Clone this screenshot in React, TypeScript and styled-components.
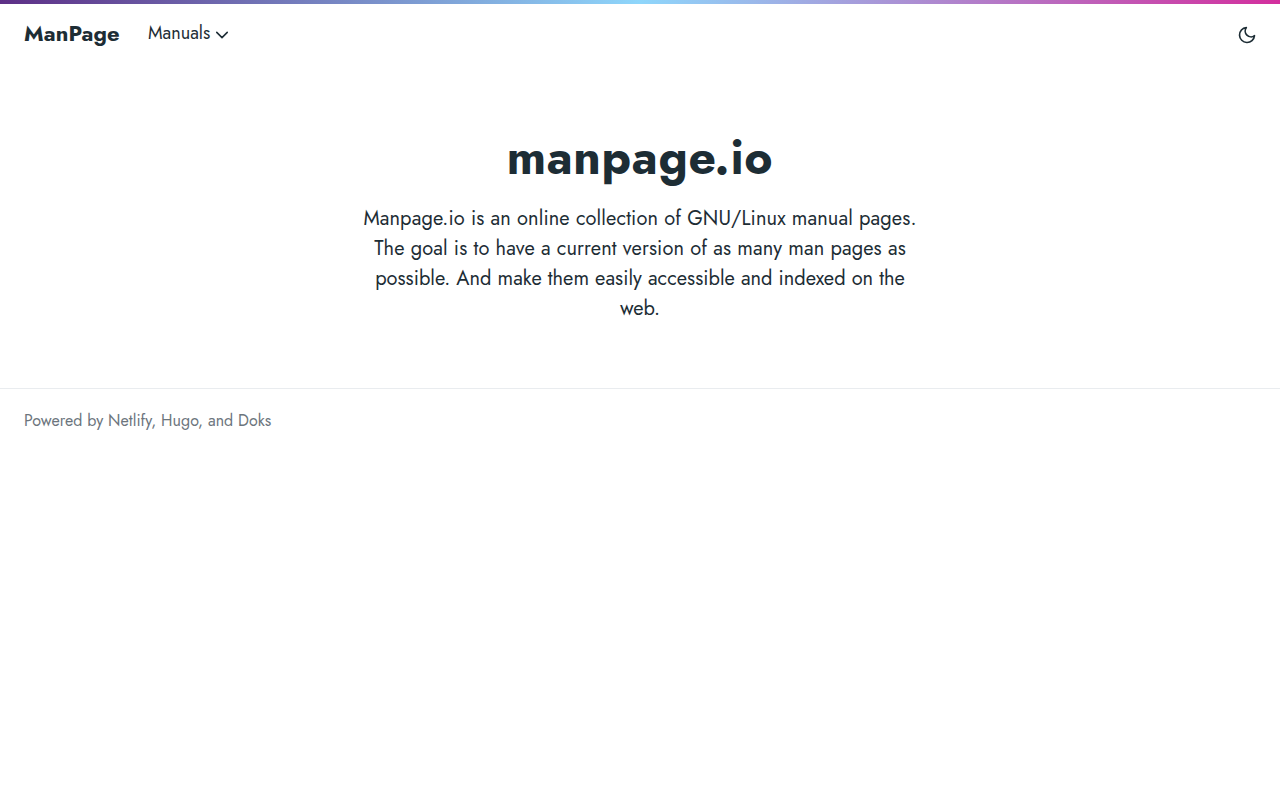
import React from "react";
import styled, { createGlobalStyle } from "styled-components";

const GlobalStyle = createGlobalStyle`
  *, *::before, *::after { box-sizing: border-box; }
  body {
    margin: 0;
    background: #fff;
    color: #1d2d35;
    font-family: Jost, Lato, "Open Sans", sans-serif;
    font-size: 18px;
    font-weight: 370;
    line-height: 1.5;
  }
`;

const HeaderBar = styled.div`
  height: 4px;
  background: linear-gradient(90deg, #5d2f86, #8ed6fb 50%, #d32e9d);
`;

const Navbar = styled.header`
  display: flex;
  align-items: center;
  height: 60px;
  padding: 0 24px;
`;

const Brand = styled.a`
  width: 124px;
  padding-bottom: 2px;
  font-size: 22px;
  font-weight: 700;
  letter-spacing: 0.1px;
  white-space: nowrap;
`;

const NavItem = styled.button`
  display: flex;
  align-items: center;
  gap: 5px;
  padding: 0 0 1px;
  border: 0;
  background: none;
  color: inherit;
  font: inherit;
`;

const Chevron = styled.svg`
  position: relative;
  top: 1px;
`;

const ModeToggle = styled.button`
  display: flex;
  margin: 0 -1px 0 auto;
  padding: 2px 0 0;
  border: 0;
  background: none;
  color: inherit;
`;

const Hero = styled.main`
  display: flex;
  flex-direction: column;
  align-items: center;
  height: 324px;
  padding-top: 64px;
  text-align: center;
`;

const Title = styled.h1`
  margin: 0;
  font-size: 48px;
  font-weight: 700;
  line-height: 60px;
  letter-spacing: 0.7px;
`;

const Lead = styled.p`
  margin: 16px 0 0;
  font-size: 20px;
  line-height: 30px;
`;

const Line = styled.span<{ $spacing: number }>`
  display: block;
  white-space: nowrap;
  letter-spacing: ${(p) => p.$spacing}px;
`;

const Footer = styled.footer`
  padding: 20px 24px;
  border-top: 1px solid #e9ecef;
  color: #6c757d;
  font-size: 16px;
  line-height: 24px;
  letter-spacing: 0.03px;
`;

const leadLines = [
  { text: "Manpage.io is an online collection of GNU/Linux manual pages.", spacing: 0.12 },
  { text: "The goal is to have a current version of as many man pages as", spacing: 0.12 },
  { text: "possible. And make them easily accessible and indexed on the", spacing: 0.03 },
  { text: "web.", spacing: 0 },
];

export default function App() {
  return (
    <>
      <GlobalStyle />
      <HeaderBar />
      <Navbar>
        <Brand>ManPage</Brand>
        <NavItem>
          <span>Manuals</span>
          <Chevron width="14" height="14" viewBox="0 0 16 16" fill="none" stroke="currentColor" strokeWidth="1.8" strokeLinecap="round" strokeLinejoin="round">
            <path d="m2 5 6 6 6-6" />
          </Chevron>
        </NavItem>
        <ModeToggle aria-label="Toggle mode">
          <svg width="20" height="20" viewBox="0 0 24 24" fill="none" stroke="currentColor" strokeWidth="2" strokeLinecap="round" strokeLinejoin="round">
            <path d="M21 12.79A9 9 0 1 1 11.21 3 7 7 0 0 0 21 12.79z" />
          </svg>
        </ModeToggle>
      </Navbar>
      <Hero>
        <Title>manpage.io</Title>
        <Lead>
          {leadLines.map((line) => (
            <Line key={line.text} $spacing={line.spacing}>{line.text} </Line>
          ))}
        </Lead>
      </Hero>
      <Footer>Powered by Netlify, Hugo, and Doks</Footer>
    </>
  );
}
